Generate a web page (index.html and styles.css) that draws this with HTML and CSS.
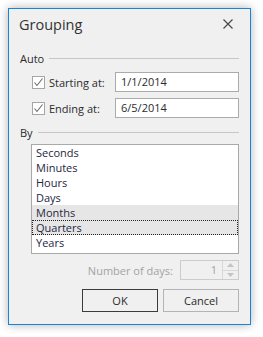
FILE: index.html
```html
<!DOCTYPE html>
<html lang="en">
<head>
  <meta charset="UTF-8" />
  <title>Grouping</title>
  <link rel="stylesheet" href="styles.css">
</head>
<body>
  <div class="dialog">
    <div class="titlebar">
      <span class="title">Grouping</span>
      <svg class="close" width="10" height="10" viewBox="0 0 10 10">
        <path d="M0.5 0.5 L9.5 9.5 M9.5 0.5 L0.5 9.5" stroke="#444" stroke-width="1.1" fill="none" />
      </svg>
    </div>

    <div class="content">
      <div class="group-head"><span>Auto</span><div class="rule"></div></div>

      <div class="indent">
        <div class="field-row">
          <label class="check">
            <span class="box">
              <svg width="11" height="11" viewBox="0 0 11 11"><path d="M1.5 5.5 L4 8.5 L9.5 1.5" stroke="#6a6a6a" stroke-width="1.1" fill="none" /></svg>
            </span>
            Starting at:
          </label>
          <div class="textbox">1/1/2014</div>
        </div>
        <div class="field-row">
          <label class="check">
            <span class="box">
              <svg width="11" height="11" viewBox="0 0 11 11"><path d="M1.5 5.5 L4 8.5 L9.5 1.5" stroke="#6a6a6a" stroke-width="1.1" fill="none" /></svg>
            </span>
            Ending at:
          </label>
          <div class="textbox">6/5/2014</div>
        </div>
      </div>

      <div class="group-head by"><span>By</span><div class="rule"></div></div>

      <div class="indent">
        <div class="listbox">
          <div class="item">Seconds</div>
          <div class="item">Minutes</div>
          <div class="item">Hours</div>
          <div class="item">Days</div>
          <div class="item hot">Months</div>
          <div class="item hot focus">Quarters</div>
          <div class="item">Years</div>
        </div>

        <div class="spin-row">
          <span class="muted">Number of days:</span>
          <div class="spin">
            <span class="spin-value">1</span>
            <div class="spin-btns">
              <div class="spin-btn"><svg width="7" height="4" viewBox="0 0 7 4"><path d="M0 4 L3.5 0 L7 4 Z" fill="#c4c4c4" /></svg></div>
              <div class="spin-btn"><svg width="7" height="4" viewBox="0 0 7 4"><path d="M0 0 L3.5 4 L7 0 Z" fill="#c4c4c4" /></svg></div>
            </div>
          </div>
        </div>

        <div class="buttons">
          <button class="btn default">OK</button>
          <button class="btn">Cancel</button>
        </div>
      </div>
    </div>
  </div>
</body>
</html>
```

FILE: styles.css
```css
body {
  margin: 0;
  background-color: #ffffff;
  font-family: 'Open Sans', 'Noto Sans', sans-serif;
  font-size: 11px;
  color: #2b2b2b;
}

.dialog {
  margin: 8px;
  width: 243px;
  height: 317px;
  box-sizing: border-box;
  border: 1px solid #1883d7;
  background-color: #f0f0f0;
  box-shadow: 0 0 9px rgba(0, 0, 0, 0.3);
  display: flex;
  flex-direction: column;
}

.titlebar {
  height: 30px;
  display: flex;
  align-items: center;
  justify-content: space-between;
  padding: 0 17px 0 10px;
}

.title {
  font-size: 14.5px;
  color: #333;
}

.content {
  padding: 0 11px 0 11px;
}

/* group headers */
.group-head {
  height: 16px;
  margin-top: 11px;
  display: flex;
  align-items: center;
  gap: 5px;
}
.group-head.by {
  margin-top: 6px;
}
.rule {
  flex-grow: 1;
  height: 1px;
  background-color: #c6c6c6;
}

.indent {
  padding-left: 11px;
}

/* date rows */
.field-row {
  display: flex;
  align-items: center;
  justify-content: space-between;
  height: 20px;
  margin-top: 6px;
}
.check {
  display: flex;
  align-items: center;
  gap: 4px;
  margin-left: 1px;
}
.box {
  width: 13px;
  height: 13px;
  box-sizing: border-box;
  border: 1px solid #a6a6a6;
  background-color: #fff;
  display: flex;
  align-items: center;
  justify-content: center;
}
.textbox {
  width: 124px;
  height: 20px;
  box-sizing: border-box;
  border: 1px solid #ababab;
  background-color: #fff;
  padding: 0 5px;
  line-height: 18px;
}

/* list */
.listbox {
  margin-top: 4px;
  height: 110px;
  box-sizing: border-box;
  border: 1px solid #a9a9a9;
  background-color: #fff;
  color: #262642;
}
.item {
  height: 15px;
  line-height: 15px;
  padding-left: 4px;
  box-sizing: border-box;
}
.item.hot {
  background-color: #e6e6e6;
}
.item.focus {
  border: 1px dotted #222;
  padding-left: 3px;
  line-height: 13px;
}

/* number of days */
.spin-row {
  display: flex;
  justify-content: flex-end;
  align-items: center;
  gap: 7px;
  margin-top: 6px;
  height: 20px;
}
.muted {
  color: #a3a3a3;
}
.spin {
  width: 59px;
  height: 20px;
  box-sizing: border-box;
  border: 1px solid #cccccc;
  display: flex;
  color: #a3a3a3;
}
.spin-value {
  flex-grow: 1;
  text-align: right;
  padding-right: 5px;
  line-height: 18px;
}
.spin-btns {
  width: 15px;
  display: flex;
  flex-direction: column;
  border-left: 1px solid #d8d8d8;
}
.spin-btn {
  flex-grow: 1;
  display: flex;
  align-items: center;
  justify-content: center;
}
.spin-btn + .spin-btn {
  border-top: 1px solid #d8d8d8;
}

/* buttons */
.buttons {
  display: flex;
  justify-content: flex-end;
  gap: 5px;
  margin-top: 9px;
}
.btn {
  width: 76px;
  height: 23px;
  font-family: 'Open Sans', 'Noto Sans', sans-serif;
  font-size: 11px;
  color: #2b2b2b;
  background-color: #f0f0f0;
  border: 1px solid #b4b4b4;
  padding: 0;
}
.btn.default {
  border-color: #3c3c3c;
}
```
